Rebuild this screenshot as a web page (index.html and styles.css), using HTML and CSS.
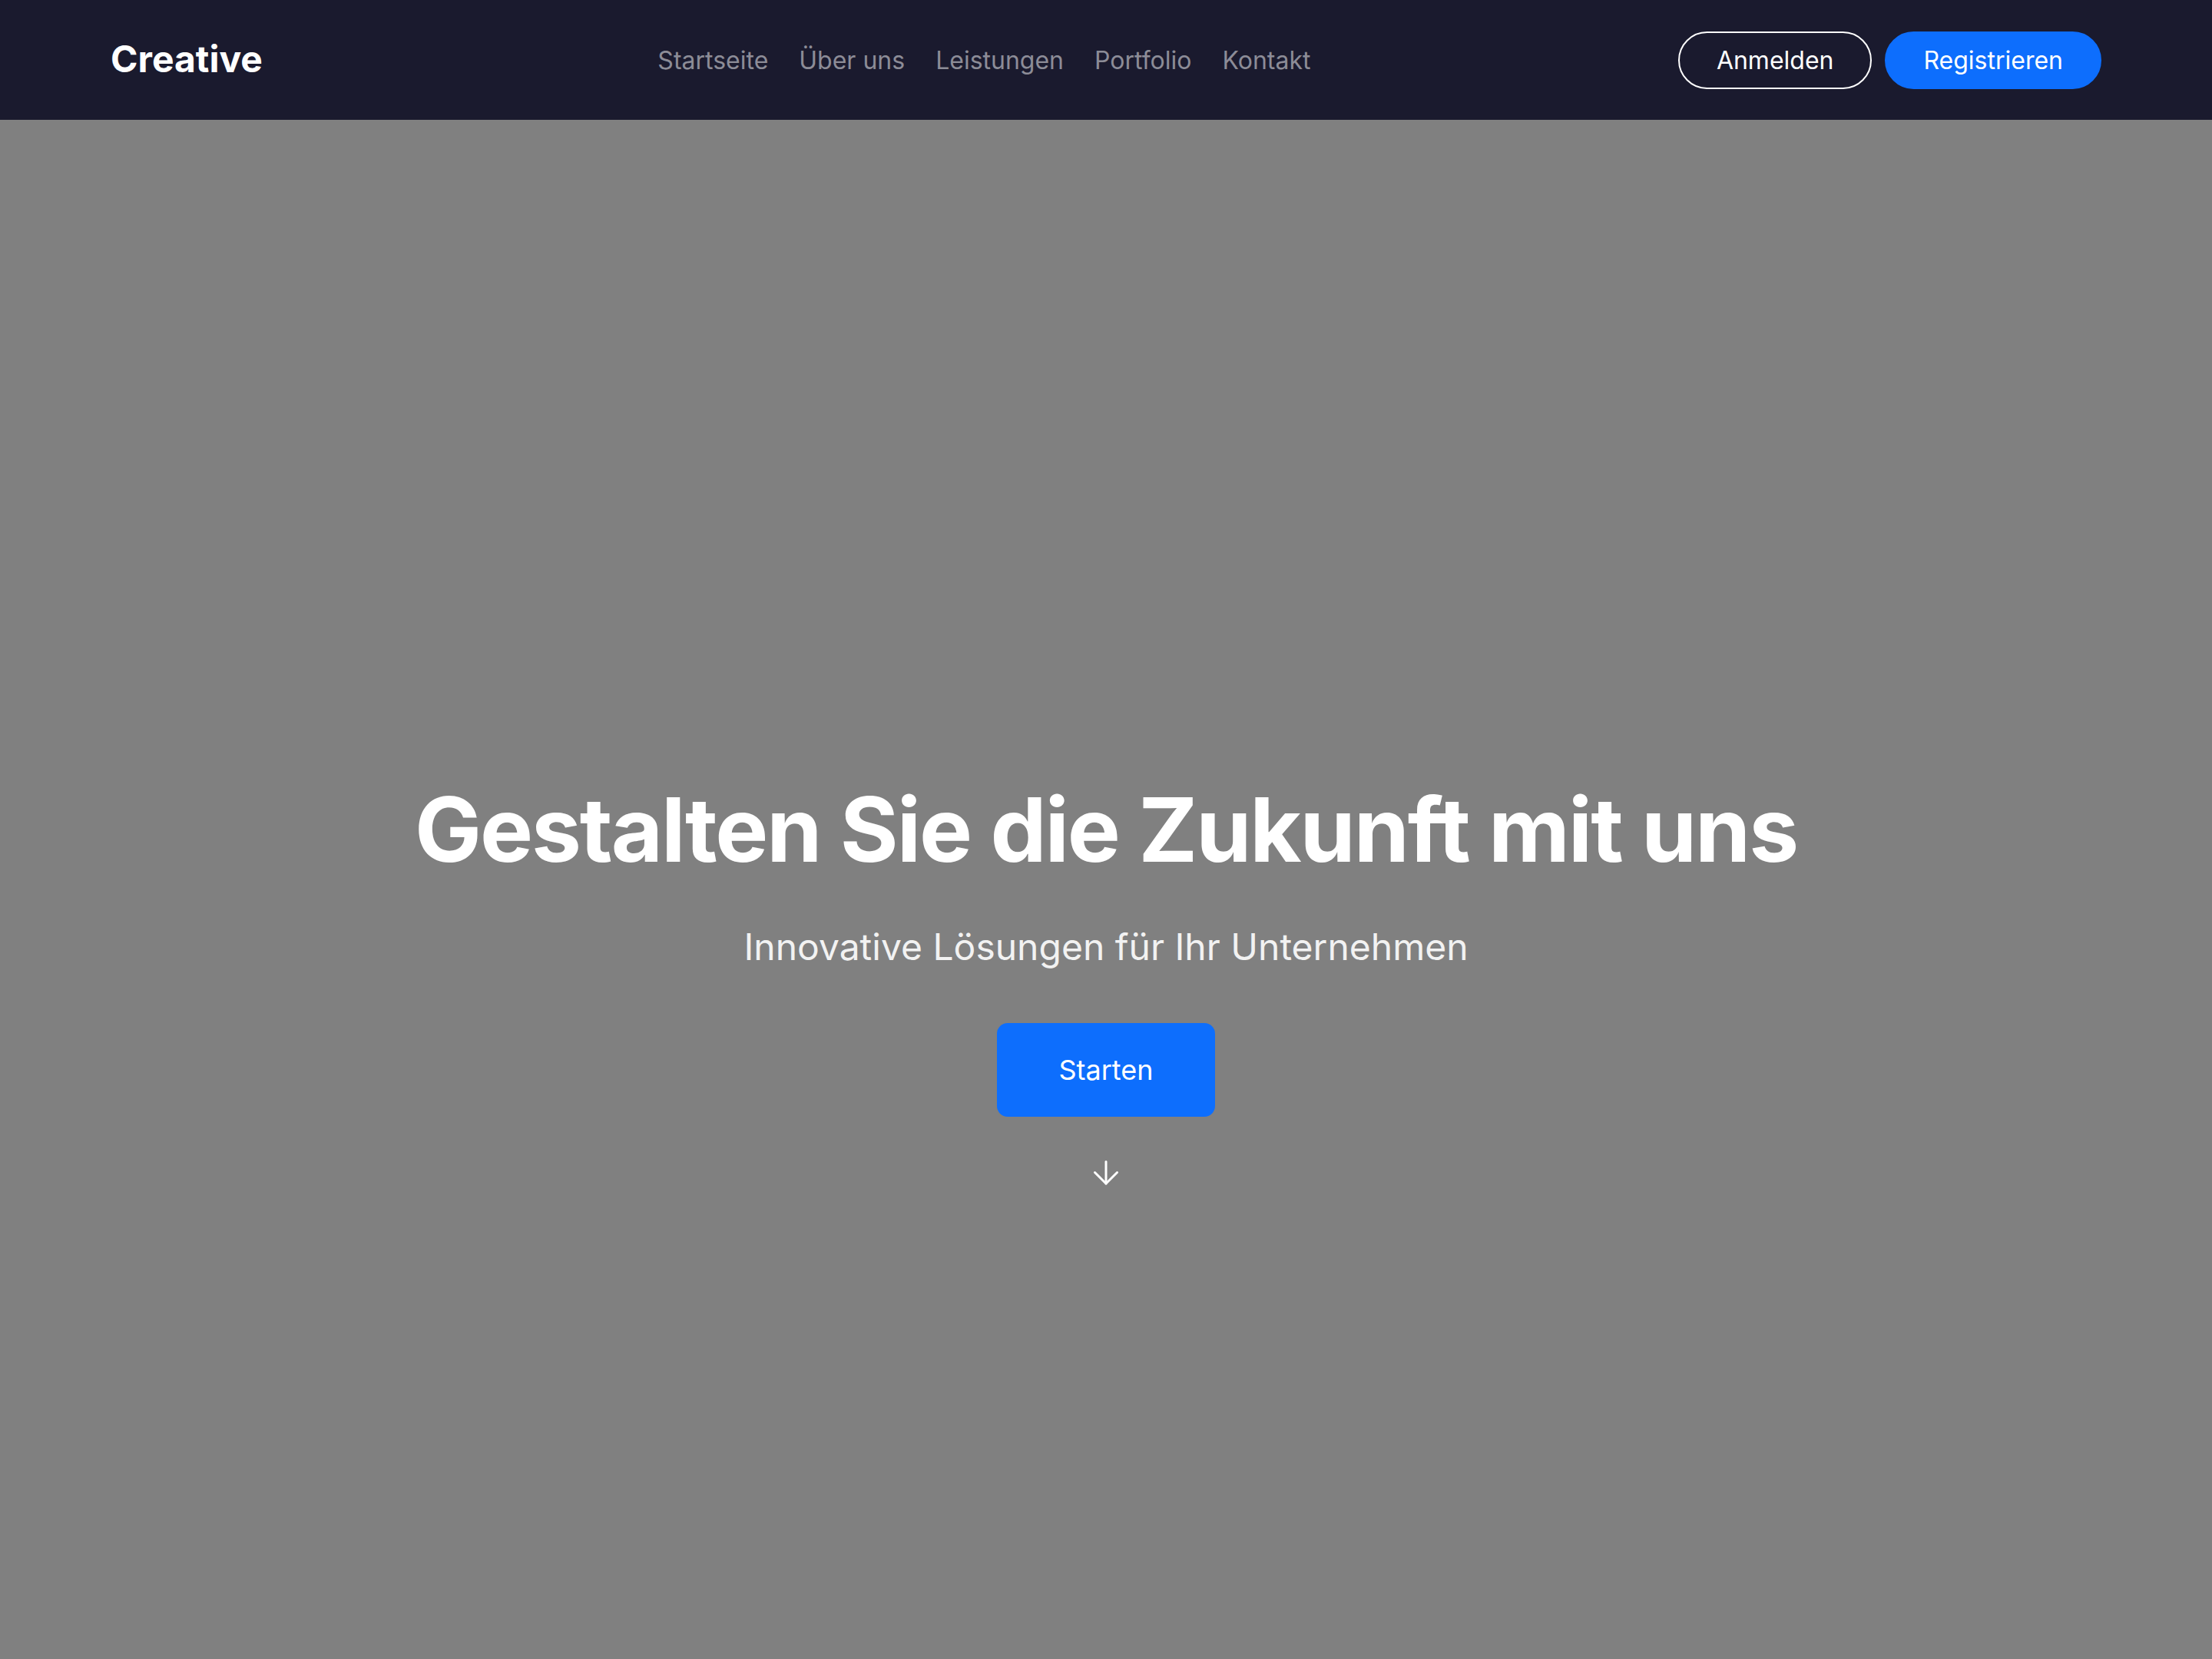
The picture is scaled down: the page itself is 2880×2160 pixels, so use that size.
FILE: index.html
```html
<!DOCTYPE html>
<html lang="de">
<head>
<meta charset="utf-8">
<title>Creative</title>
<link rel="stylesheet" href="styles.css">
</head>
<body>
<header class="topbar">
  <a class="brand" href="#">Creative</a>
  <nav class="menu">
    <a href="#">Startseite</a>
    <a href="#">Über uns</a>
    <a href="#">Leistungen</a>
    <a href="#">Portfolio</a>
    <a href="#">Kontakt</a>
  </nav>
  <div class="auth">
    <a class="btn btn-outline" href="#">Anmelden</a>
    <a class="btn btn-primary" href="#">Registrieren</a>
  </div>
</header>
<main class="hero">
  <div class="hero-inner">
    <h1 class="hero-title">Gestalten Sie die Zukunft mit uns</h1>
    <p class="hero-sub">Innovative Lösungen für Ihr Unternehmen</p>
    <a class="cta" href="#">Starten</a>
    <svg class="scroll-hint" width="32" height="32" viewBox="0 0 32 32" fill="none" stroke="#fff" stroke-width="3" stroke-linecap="round" stroke-linejoin="round">
      <line x1="16" y1="1.5" x2="16" y2="30"/>
      <polyline points="1.5,15.5 16,30 30.5,15.5"/>
    </svg>
  </div>
</main>
</body>
</html>
```
FILE: styles.css
```css
* { box-sizing: border-box; }

html, body {
  margin: 0;
  padding: 0;
}

body {
  font-family: Inter, "Noto Sans", sans-serif;
  background: #808080;
  color: #fff;
}

a { text-decoration: none; color: inherit; }

/* top navigation bar */
.topbar {
  height: 156px;
  background: #1a1a2e;
  display: flex;
  align-items: center;
  justify-content: space-between;
  padding: 0 144px;
}

.brand {
  font-size: 48px;
  font-weight: 700;
  color: #fff;
  margin-top: -4px;
}

.menu {
  display: flex;
  gap: 40px;
  padding-left: 36px;
}

.menu a {
  font-size: 32px;
  color: #8c8c97;
}

.auth {
  display: flex;
  gap: 17px;
}

.btn {
  font-size: 32px;
  line-height: 39px;
  padding: 16px 48px;
  border-radius: 999px;
  border: 2px solid transparent;
  color: #fff;
}

.btn-outline {
  border-color: #fff;
}

.btn-primary {
  background: #0d6efd;
  border-color: #0d6efd;
}

/* hero section */
.hero {
  height: 2004px;
  background: #808080;
  display: flex;
  align-items: center;
  justify-content: center;
  padding-top: 238px;
}

.hero-inner {
  display: flex;
  flex-direction: column;
  align-items: center;
  text-align: center;
}

.hero-title {
  margin: 0;
  font-size: 116px;
  font-weight: 700;
  line-height: 1.2;
  letter-spacing: -0.018em;
}

.hero-sub {
  margin: 46px 0 0;
  font-size: 48px;
  line-height: 1.5;
  color: #f2f2f2;
}

.cta {
  margin-top: 63px;
  display: block;
  width: 284px;
  height: 122px;
  line-height: 122px;
  border-radius: 14px;
  background: #0d6efd;
  font-size: 36px;
  color: #fff;
}

.scroll-hint {
  margin-top: 57px;
  display: block;
}
```
